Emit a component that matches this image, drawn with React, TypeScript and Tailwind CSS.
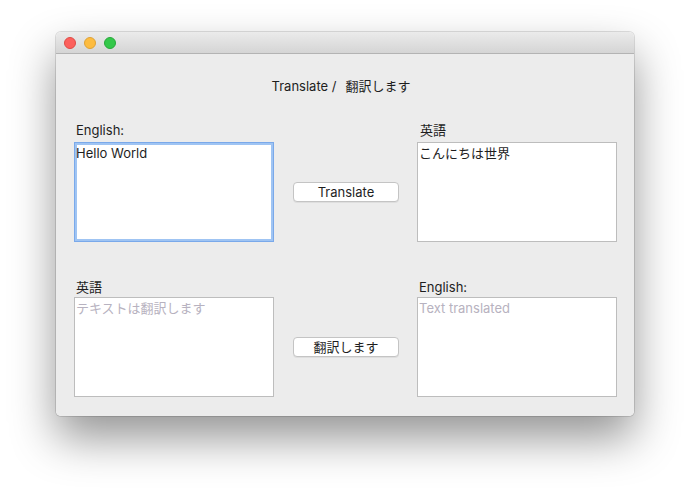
import React from "react";

const font = { fontFamily: '"Inter", "Noto Sans CJK JP", sans-serif' };

function Label({ children, className = "" }: { children: React.ReactNode; className?: string }) {
  return <div className={`h-[16px] leading-[16px] text-[13px] text-[#1e1e1e] pl-[2px] ${className}`}>{children}</div>;
}

function Box({ value, placeholder, focused }: { value?: string; placeholder?: string; focused?: boolean }) {
  return (
    <textarea
      readOnly
      defaultValue={value}
      placeholder={placeholder}
      className={`block w-[200px] h-[100px] resize-none outline-none bg-white text-[13px] leading-[16px] text-[#1e1e1e] placeholder:text-[#b7b2c0] pt-[2px] pl-[1px] overflow-hidden border ${
        focused
          ? "border-[#7aa9ea] shadow-[inset_0_0_0_2px_#9fc4f3]"
          : "border-[#bdbdbd]"
      }`}
      style={font}
    />
  );
}

function Button({ children }: { children: React.ReactNode }) {
  return (
    <div className="w-[106px] h-[20px] bg-white border border-[#c4c4c4] rounded-[4px] shadow-[0_1px_0_rgba(0,0,0,0.06)] flex items-center justify-center text-[13px] text-[#1e1e1e] leading-none">
      {children}
    </div>
  );
}

export default function App() {
  return (
    <div className="w-[690px] h-[496px] bg-white overflow-hidden pt-[32px] pl-[56px]" style={font}>
      <div className="w-[578px] h-[384px] rounded-[5px] overflow-hidden flex flex-col shadow-[0_0_0_1px_rgba(0,0,0,0.12),0_22px_45px_rgba(0,0,0,0.42)]">
        <div className="h-[22px] shrink-0 bg-gradient-to-b from-[#ebebeb] to-[#d5d5d5] border-b border-[#b3b3b3] flex items-center gap-[8px] pl-[8px]">
          <span className="w-[12px] h-[12px] rounded-full bg-[#fc605c] border border-[#de4b45]" />
          <span className="w-[12px] h-[12px] rounded-full bg-[#fdbc40] border border-[#dea236]" />
          <span className="w-[12px] h-[12px] rounded-full bg-[#34c84a] border border-[#28a83a]" />
        </div>
        <div className="flex-1 bg-[#ececec] pl-[18px] pr-[17px] pt-[24px]">
          <div className="h-[16px] flex justify-center items-center text-[13px] leading-[16px] text-[#1e1e1e] pr-[9px]">
            <span>Translate /</span>
            <span className="ml-[9px]">翻訳します</span>
          </div>
          <div className="mt-[28px] grid grid-cols-[200px_143px_200px]">
            <div>
              <Label className="mb-[4px]">English:</Label>
              <Box value="Hello World" focused />
            </div>
            <div className="pt-[20px] h-[120px] flex items-center pl-[19px]">
              <Button>Translate</Button>
            </div>
            <div>
              <Label className="mb-[4px] pl-[3px]">英語</Label>
              <Box value="こんにちは世界" />
            </div>
          </div>
          <div className="mt-[37px] grid grid-cols-[200px_143px_200px]">
            <div>
              <Label className="mb-[2px]">英語</Label>
              <Box placeholder="テキストは翻訳します" />
            </div>
            <div className="pt-[18px] h-[118px] flex items-center pl-[19px]">
              <Button>翻訳します</Button>
            </div>
            <div>
              <Label className="mb-[2px]">English:</Label>
              <Box placeholder="Text translated" />
            </div>
          </div>
        </div>
      </div>
    </div>
  );
}
